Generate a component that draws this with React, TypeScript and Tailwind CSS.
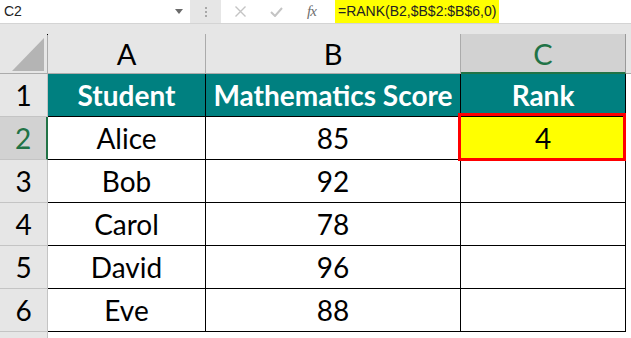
const rows = [
  { name: "Alice", score: 85 },
  { name: "Bob", score: 92 },
  { name: "Carol", score: 78 },
  { name: "David", score: 96 },
  { name: "Eve", score: 88 },
];

const App = () => {
  return (
    <div className="w-[631px] h-[338px] overflow-hidden bg-[#e6e6e6] font-['Lato',sans-serif] text-black">
      {/* Formula bar */}
      <div className="flex h-[24px] border-b border-[#d4d4d4]">
        <div className="w-[190px] h-full bg-white flex items-center justify-between pl-[4px] pr-[7px] font-['Liberation_Sans',sans-serif] text-[14px] text-[#222]">
          <span>C2</span>
          <svg width="8" height="5" viewBox="0 0 8 5">
            <path d="M0 0h8L4 5z" fill="#6b6b6b" />
          </svg>
        </div>
        <div className="w-[31px] flex flex-col items-center justify-center gap-[2px]">
          <span className="w-[2px] h-[2px] bg-[#a8a8a8]" />
          <span className="w-[2px] h-[2px] bg-[#a8a8a8]" />
          <span className="w-[2px] h-[2px] bg-[#a8a8a8]" />
        </div>
        <div className="flex-1 h-full bg-white flex items-center">
          <svg className="ml-[14px]" width="11" height="11" viewBox="0 0 11 11">
            <path d="M0.5 0.5l10 10M10.5 0.5l-10 10" stroke="#c4c4c4" strokeWidth="1.4" />
          </svg>
          <svg className="ml-[24px]" width="13" height="10" viewBox="0 0 13 10">
            <path d="M1 5l4 4 7-8" stroke="#c4c4c4" strokeWidth="2" fill="none" />
          </svg>
          <span className="ml-[24px] w-[28px] font-['Liberation_Serif',serif] italic text-[15px] text-[#6e6e6e] tracking-[-1px]">fx</span>
          <div className="h-[23px] self-start bg-[#ffff00] flex items-center px-[3px] font-['Liberation_Sans',sans-serif] text-[14px] text-[#222]">
            =RANK(B2,$B$2:$B$6,0)
          </div>
        </div>
      </div>

      {/* Column headers */}
      <div className="mt-[10px] flex h-[40px] text-[29px] leading-none">
        <div className="w-[48px] h-full border-r border-b border-[#ababab] flex items-end justify-end pr-[3px] pb-[2px] relative">
          <span className="absolute left-[47px] top-0 w-[1px] h-[1px] bg-black" />
          <svg width="32" height="33" viewBox="0 0 32 33">
            <path d="M32 0V33H0z" fill="#b4b4b4" />
          </svg>
        </div>
        <div className="w-[158px] h-full border-r border-b border-[#ababab] flex items-center justify-center">A</div>
        <div className="w-[255px] h-full border-r border-b border-[#ababab] flex items-center justify-center">B</div>
        <div className="w-[165px] h-full border-r border-[#9a9a9a] border-b-2 border-b-[#217346] bg-[#d2d2d2] flex items-center justify-center text-[#217346]">C</div>
        <div className="flex-1 h-full border-b border-[#ababab]" />
      </div>

      {/* Header row 1 */}
      <div className="flex h-[43px] text-[28px] leading-none">
        <div className="w-[48px] h-full border-r border-b border-[#c4c4c4] flex items-center justify-center">1</div>
        <div className="w-[158px] h-full bg-[#008080] border-r border-b border-black flex items-center justify-center font-bold text-white">Student</div>
        <div className="w-[255px] h-full bg-[#008080] border-r border-b border-black flex items-center justify-center font-bold text-white">Mathematics Score</div>
        <div className="w-[165px] h-full bg-[#008080] border-r border-b border-black flex items-center justify-center font-bold text-white">Rank</div>
        <div className="flex-1 h-full bg-white" />
      </div>

      {/* Data rows */}
      {rows.map((r, i) => {
        const selected = i === 0;
        return (
          <div key={r.name} className="flex h-[43px] text-[28px] leading-none">
            <div
              className={`w-[48px] h-full border-b border-[#c4c4c4] flex items-center justify-center ${
                selected ? "bg-[#d2d2d2] border-r-2 border-r-[#217346] text-[#217346]" : "border-r"
              }`}
            >
              {i + 2}
            </div>
            <div className="w-[158px] h-full bg-white border-r border-b border-black flex items-center justify-center">{r.name}</div>
            <div className="w-[255px] h-full bg-white border-r border-b border-black flex items-center justify-center">{r.score}</div>
            <div className={`w-[165px] h-full border-r border-b border-black flex items-center justify-center relative ${selected ? "bg-[#ffff00]" : "bg-white"}`}>
              {selected && (
                <>
                  <span>4</span>
                  <span className="absolute z-10 -left-[3px] -top-[4px] -right-[1px] -bottom-[2px] border-[3px] border-[#ff0000]" />
                </>
              )}
            </div>
            <div className="flex-1 h-full bg-white" />
          </div>
        );
      })}

      {/* Row 7 (cut off) */}
      <div className="flex h-[10px]">
        <div className="w-[48px] h-full border-r border-[#c4c4c4]" />
        <div className="flex-1 h-full bg-white" />
      </div>
    </div>
  );
};

export default App;
